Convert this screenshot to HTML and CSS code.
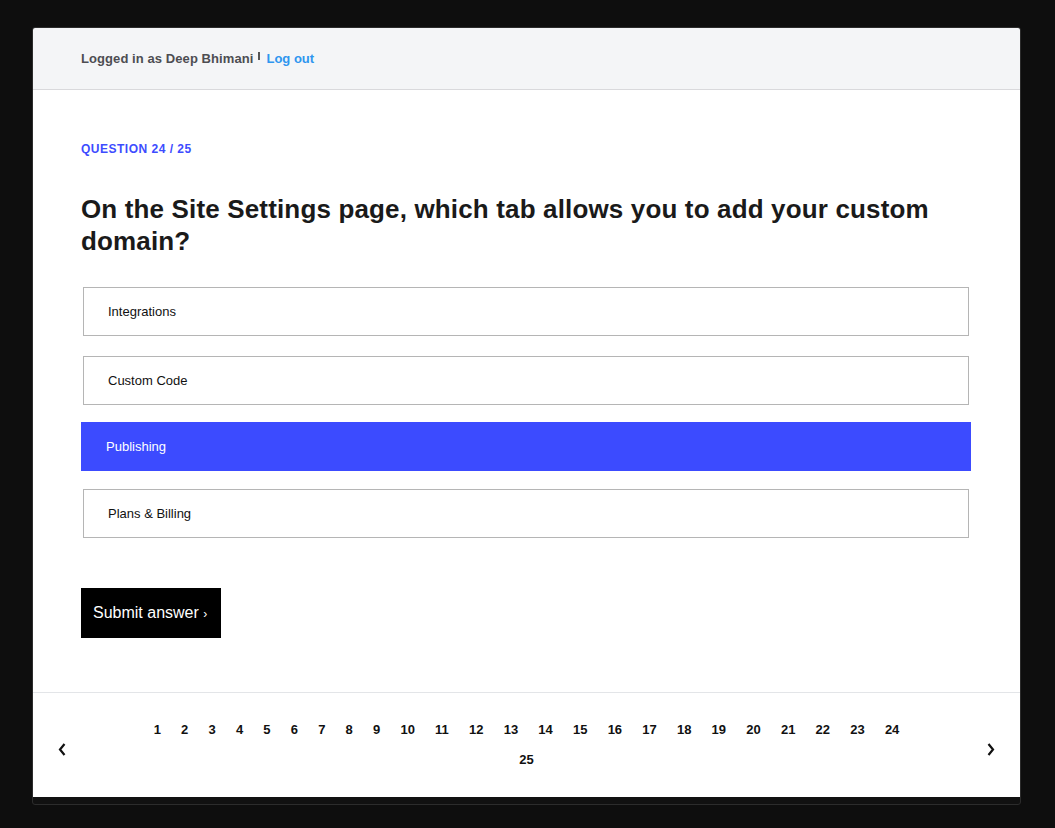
FILE: index.html
```html
<!DOCTYPE html>
<html>
<head>
<meta charset="utf-8">
<link rel="stylesheet" href="styles.css">
</head>
<body>
<div class="card">
  <header class="topbar">
    <span class="user">Logged in as Deep Bhimani</span>
    <span class="sep"></span>
    <a class="logout">Log out</a>
  </header>
  <main class="quiz">
    <div class="qlabel">QUESTION 24 / 25</div>
    <h1 class="qtitle">On the Site Settings page, which tab allows you to add your custom domain?</h1>
    <div class="options">
      <div class="option">Integrations</div>
      <div class="option">Custom Code</div>
      <div class="option selected">Publishing</div>
      <div class="option">Plans &amp; Billing</div>
    </div>
    <button class="submit">Submit answer <span class="arr">›</span></button>
  </main>
  <footer class="pager">
    <span class="nav">
      <svg width="8" height="13" viewBox="0 0 8 13"><path d="M6.5 1 L2 6.5 L6.5 12" fill="none" stroke="#111" stroke-width="2.2"/></svg>
    </span>
    <div class="pages">
      <span>1</span><span>2</span><span>3</span><span>4</span><span>5</span><span>6</span><span>7</span><span>8</span><span>9</span><span>10</span><span>11</span><span>12</span><span>13</span><span>14</span><span>15</span><span>16</span><span>17</span><span>18</span><span>19</span><span>20</span><span>21</span><span>22</span><span>23</span><span>24</span><span>25</span>
    </div>
    <span class="nav">
      <svg width="8" height="13" viewBox="0 0 8 13"><path d="M1.5 1 L6 6.5 L1.5 12" fill="none" stroke="#111" stroke-width="2.2"/></svg>
    </span>
  </footer>
</div>
</body>
</html>
```

FILE: styles.css
```css
html, body {
  margin: 0;
  padding: 0;
  background: #0e0e0e;
  font-family: "Liberation Sans", Arial, sans-serif;
}
body {
  padding: 27px 34px 0 32px;
}
.card {
  width: 987px;
  background: #111;
  border: 1px solid #2c2c2c;
  border-radius: 3px;
  overflow: hidden;
  padding-bottom: 7px;
}
.topbar {
  background: #f4f5f7;
  height: 61px;
  border-bottom: 1px solid #d9d9dc;
  display: flex;
  align-items: center;
  padding-left: 48px;
  font-size: 13px;
  font-weight: bold;
}
.user {
  color: #4d4d52;
  letter-spacing: 0.08px;
}
.sep {
  display: inline-block;
  width: 2px;
  height: 8px;
  background: #555;
  margin: 0 6px 5px 5px;
}
.logout {
  color: #2f96ef;
}
.quiz {
  background: #fff;
  padding: 52px 49px 54px 48px;
  border-bottom: 1px solid #e3e5e8;
}
.qlabel {
  color: #3d4cff;
  font-size: 12px;
  font-weight: bold;
  line-height: 14px;
  letter-spacing: 0.5px;
  margin-bottom: 37px;
}
.qtitle {
  margin: 0 0 30px 0;
  font-size: 26px;
  line-height: 32px;
  font-weight: bold;
  letter-spacing: 0.15px;
  color: #1a1a1a;
}
.options {
  display: flex;
  flex-direction: column;
  gap: 18px;
}
.option {
  height: 47px;
  border: 1px solid #b5b5b5;
  margin: 0 2px;
  display: flex;
  align-items: center;
  padding-left: 24px;
  font-size: 13px;
  color: #111;
}
.option:first-child {
  margin-bottom: 2px;
}
.option.selected {
  margin: -1px 0 0 0;
  height: 49px;
  border: none;
  background: #3c4bff;
  color: #fff;
  padding-left: 25px;
}
.submit {
  margin-top: 50px;
  height: 50px;
  width: 140px;
  background: #000;
  color: #fff;
  border: none;
  font-family: "Liberation Sans", Arial, sans-serif;
  font-size: 16px;
  padding: 0 0 0 12px;
  text-align: left;
}
.submit .arr {
  font-size: 12px;
}
.pager {
  background: #fff;
  display: flex;
  align-items: center;
  padding: 22px 25px;
}
.nav {
  width: 8px;
  display: flex;
  align-items: center;
  margin-top: 8px;
}
.pages {
  flex: 1;
  display: flex;
  flex-wrap: wrap;
  justify-content: center;
  padding: 0 74px;
  font-size: 13px;
  font-weight: bold;
  color: #111;
  line-height: 30px;
}
.pages span {
  padding: 0 10.1px;
}
```
